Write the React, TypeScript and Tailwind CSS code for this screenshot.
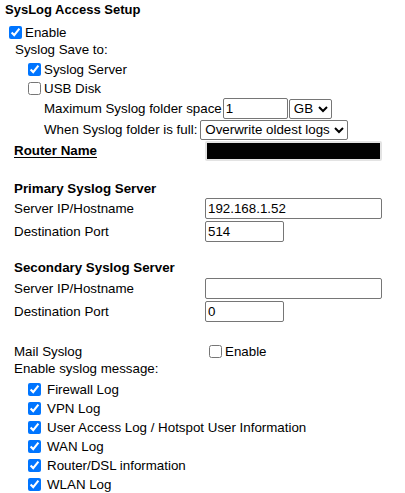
import React from "react";

const logTypes: string[] = [
  "Firewall Log",
  "VPN Log",
  "User Access Log / Hotspot User Information",
  "WAN Log",
  "Router/DSL information",
  "WLAN Log",
];

const CheckBox: React.FC<{ checked?: boolean; className?: string }> = ({
  checked,
  className,
}) => (
  <input
    type="checkbox"
    defaultChecked={checked}
    className={`m-0 ml-[4px] h-[13px] w-[13px] shrink-0 accent-[#0075ff] ${
      className ?? "mr-[3px]"
    }`}
  />
);

const TextBox: React.FC<{ value: string; className: string }> = ({
  value,
  className,
}) => (
  <input
    type="text"
    defaultValue={value}
    className={`h-[21px] rounded-[2px] border border-[#767676] bg-white px-[2px] text-[13.33px] text-black outline-none ${className}`}
  />
);

const FieldRow: React.FC<{
  label: string;
  className?: string;
  children: React.ReactNode;
}> = ({ label, className, children }) => (
  <div
    className={`grid h-[21px] grid-cols-[191px_1fr] items-center pl-[14px] ${
      className ?? ""
    }`}
  >
    <span>{label}</span>
    <div className="flex items-center">{children}</div>
  </div>
);

const App: React.FC = () => {
  return (
    <div className="h-[493px] w-[405px] overflow-hidden bg-white font-['Liberation_Sans',Arial,sans-serif] text-[13.33px] leading-none text-black">
      {/* SysLog access */}
      <div className="flex h-[19px] items-center pl-[5px] text-[13px] font-bold">
        SysLog Access Setup
      </div>
      <label className="mt-[4px] flex h-[19px] items-center pl-[5px]">
        <CheckBox checked />
        Enable
      </label>
      <div className="flex h-[15px] items-center pl-[15px]">
        Syslog Save to:
      </div>
      <label className="mt-[3px] flex h-[19px] items-center pl-[24px]">
        <CheckBox checked />
        Syslog Server
      </label>
      <label className="flex h-[19px] items-center pl-[24px]">
        <CheckBox />
        USB Disk
      </label>
      <div className="flex h-[21px] items-center pl-[44px]">
        <span>Maximum Syslog folder space</span>
        <TextBox value="1" className="ml-[1px] w-[65px]" />
        <select className="ml-[1px] h-[20px] w-[43px] rounded-[2px] border border-[#767676] bg-white text-[13.33px] text-black">
          <option>GB</option>
          <option>MB</option>
        </select>
      </div>
      <div className="flex h-[21px] items-center pl-[44px]">
        <span>When Syslog folder is full:</span>
        <select className="ml-[3px] h-[20px] w-[148px] rounded-[2px] border border-[#767676] bg-white text-[13.33px] text-black">
          <option>Overwrite oldest logs</option>
          <option>Stop logging</option>
        </select>
      </div>
      <div className="grid h-[22px] grid-cols-[191px_1fr] items-center pl-[14px]">
        <span className="font-bold underline underline-offset-[2px]">
          Router Name
        </span>
        <div className="h-[20px] w-[177px] rounded-[2px] border-2 border-[#e3e3e3] bg-black" />
      </div>

      {/* Primary server */}
      <div className="mt-[19px] flex h-[16px] items-center pl-[14px] font-bold">
        Primary Syslog Server
      </div>
      <FieldRow label="Server IP/Hostname" className="mt-[1px]">
        <TextBox value="192.168.1.52" className="w-[177px]" />
      </FieldRow>
      <FieldRow label="Destination Port" className="mt-[2px]">
        <TextBox value="514" className="w-[79px]" />
      </FieldRow>

      {/* Secondary server */}
      <div className="mt-[18px] flex h-[16px] items-center pl-[14px] font-bold">
        Secondary Syslog Server
      </div>
      <FieldRow label="Server IP/Hostname" className="mt-[2px]">
        <TextBox value="" className="w-[177px]" />
      </FieldRow>
      <FieldRow label="Destination Port" className="mt-[2px]">
        <TextBox value="0" className="w-[79px]" />
      </FieldRow>

      {/* Mail syslog */}
      <div className="mt-[20px] grid h-[19px] grid-cols-[191px_1fr] items-center pl-[14px]">
        <span>Mail Syslog</span>
        <label className="flex items-center">
          <CheckBox />
          Enable
        </label>
      </div>
      <div className="flex h-[16px] items-center pl-[14px]">
        Enable syslog message:
      </div>
      <div className="mt-[3px] flex flex-col">
        {logTypes.map((name) => (
          <label key={name} className="flex h-[19px] items-center pl-[24px]">
            <CheckBox checked className="mr-[6px]" />
            {name}
          </label>
        ))}
      </div>
    </div>
  );
};

export default App;
